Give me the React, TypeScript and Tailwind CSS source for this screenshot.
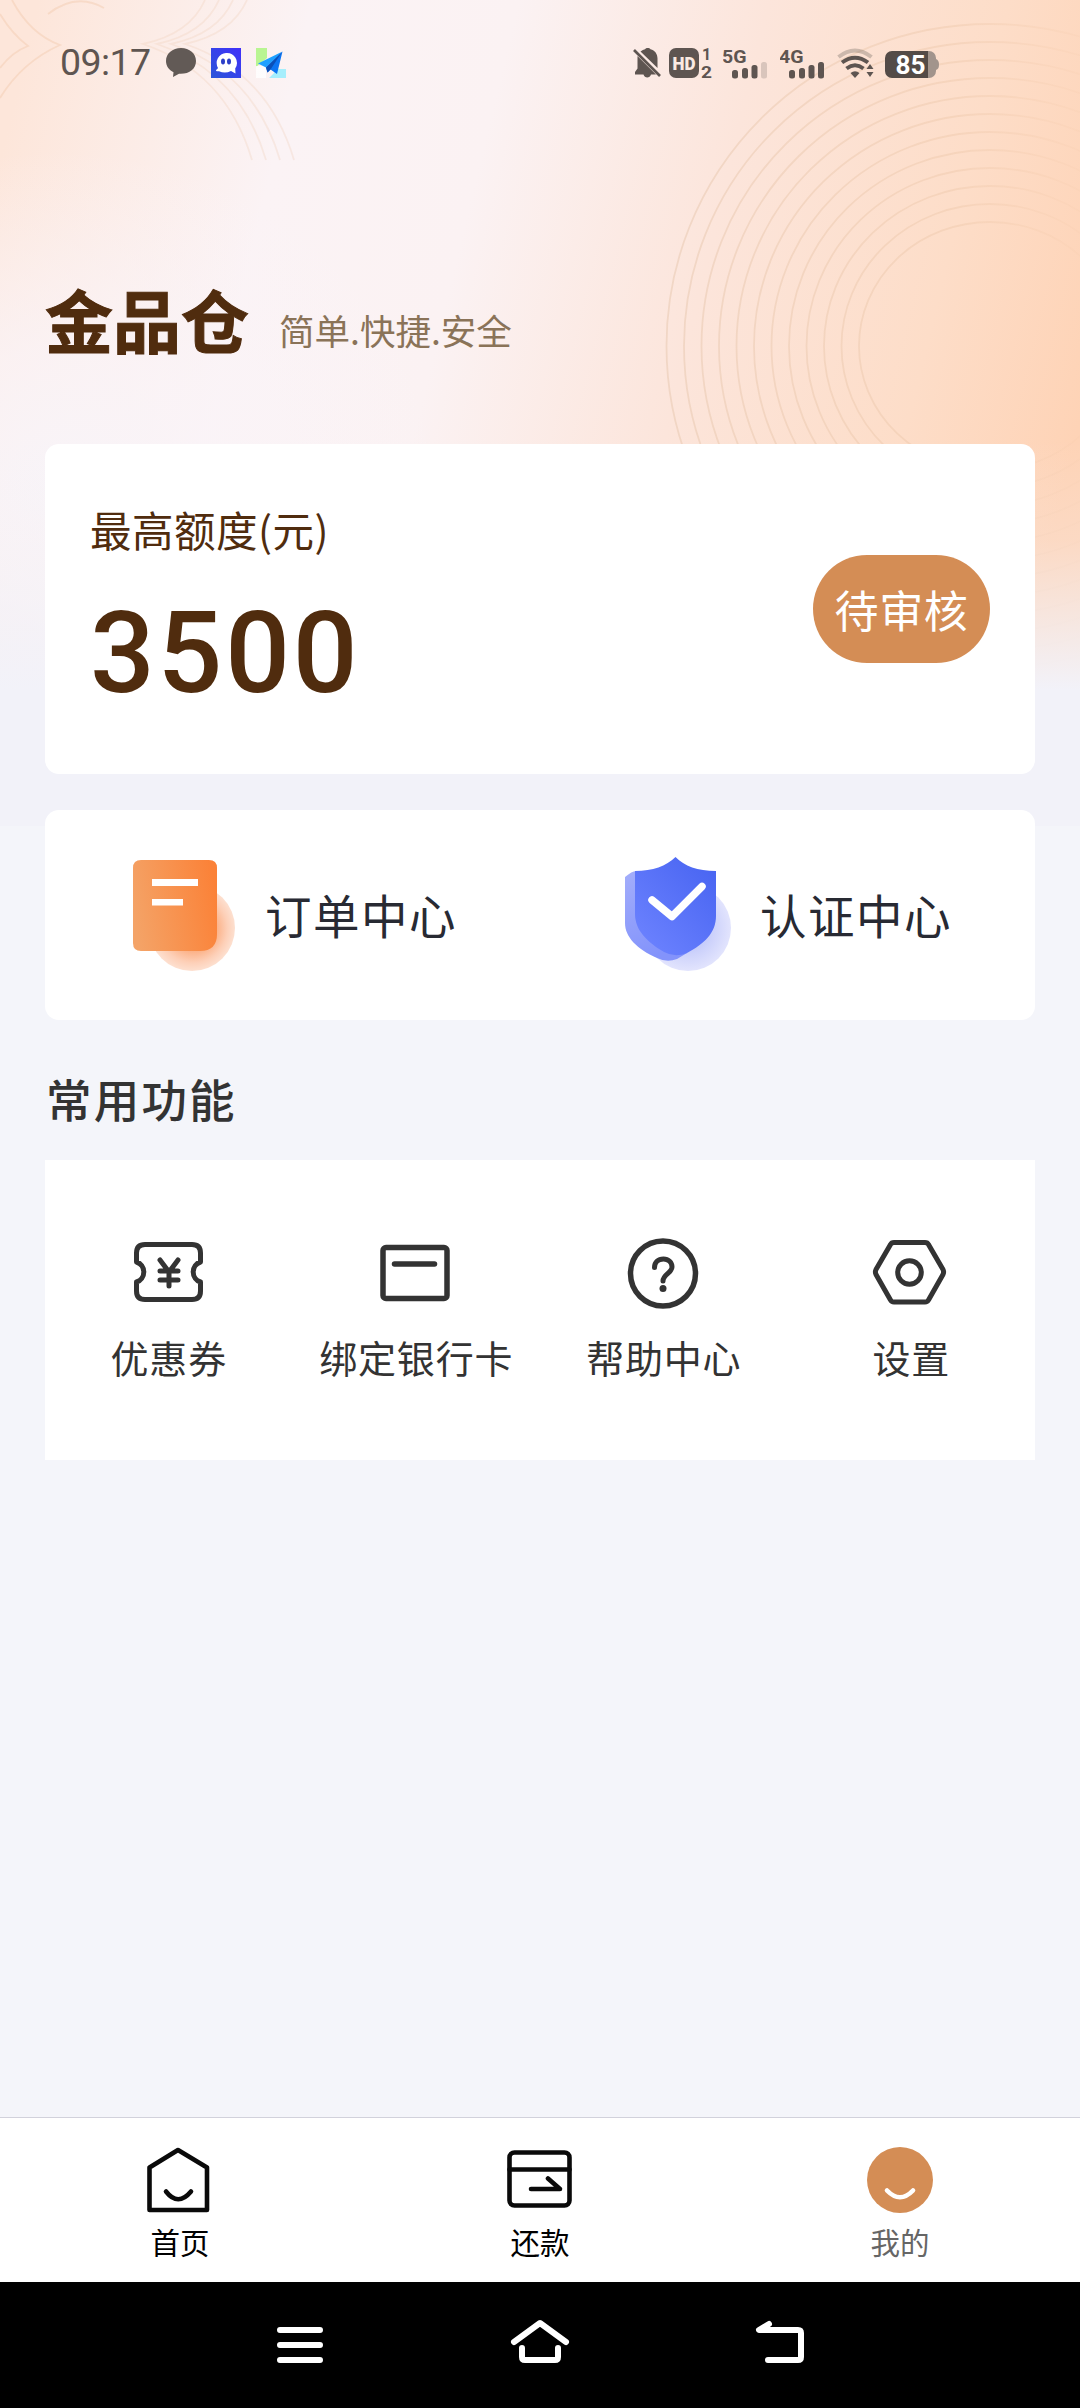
import type { ReactNode } from "react";

const rings = Array.from({ length: 12 }, (_, i) => i);
const chevrons = Array.from({ length: 4 }, (_, i) => i);

function HeaderBackdrop() {
  return (
    <div className="absolute inset-x-0 top-0 h-[826px] overflow-hidden bg-[#f2f2f9]">
      <svg width="1080" height="826" viewBox="0 0 1080 826" fill="none">
        <defs>
          <linearGradient id="wash" x1="0" y1="160" x2="1080" y2="420" gradientUnits="userSpaceOnUse">
            <stop offset="0" stopColor="#fde6da" />
            <stop offset="0.24" stopColor="#fbf3f5" />
            <stop offset="0.42" stopColor="#fbf2f3" />
            <stop offset="0.64" stopColor="#fce5db" />
            <stop offset="0.85" stopColor="#fdddc8" />
            <stop offset="1" stopColor="#fed3b6" />
          </linearGradient>
          <radialGradient id="soft" cx="0" cy="0" r="1" gradientTransform="translate(60 480) scale(380 330)" gradientUnits="userSpaceOnUse">
            <stop offset="0" stopColor="#f8f4f8" />
            <stop offset="0.4" stopColor="#faf4f8" stopOpacity="0.75" />
            <stop offset="1" stopColor="#faf4f8" stopOpacity="0" />
          </radialGradient>
          <linearGradient id="fade" x1="0" y1="440" x2="0" y2="690" gradientUnits="userSpaceOnUse">
            <stop offset="0" stopColor="#f2f2f9" stopOpacity="0" />
            <stop offset="0.4" stopColor="#f2f2f9" stopOpacity="0.2" />
            <stop offset="1" stopColor="#f2f2f9" />
          </linearGradient>
          <linearGradient id="ring" x1="660" y1="0" x2="1080" y2="0" gradientUnits="userSpaceOnUse">
            <stop offset="0" stopColor="#e6c6ad" stopOpacity="0.5" />
            <stop offset="0.7" stopColor="#ecc6a8" stopOpacity="0.42" />
            <stop offset="1" stopColor="#f3c8a8" stopOpacity="0.15" />
          </linearGradient>
        </defs>
        <rect width="1080" height="826" fill="url(#wash)" />
        <rect width="1080" height="826" fill="url(#soft)" />
        <g stroke="url(#ring)" strokeWidth="1.8">
          {rings.map((i) => (
            <ellipse key={i} cx="990" cy="346" rx={131 + i * 17.5} ry={124 + i * 18} />
          ))}
        </g>
        <g stroke="#f2caac" strokeOpacity="0.45" strokeWidth="1.8">
          <path d="M0 14Q12 34 28 46Q12 52 0 68" />
          <path d="M12 0Q30 34 60 45Q22 62 0 98" />
          <path d="M48 14Q76 -8 104 8" />
        </g>
        <g stroke="#efccb6" strokeOpacity="0.3" strokeWidth="1.8">
          {chevrons.map((i) => (
            <path key={i} d="M205 0Q190 34 143 44Q226 72 252 160" transform={`translate(${i * 14} 0)`} />
          ))}
        </g>
        <rect y="440" width="1080" height="386" fill="url(#fade)" />
      </svg>
    </div>
  );
}

function SignalIcon({ label, weak }: { label: string; weak?: boolean }) {
  return (
    <svg width="44" height="36" viewBox="0 0 44 36" fill="#5e5551">
      <text x="-1" y="17.500" fontSize="19" fontWeight="700" textLength="24.500" lengthAdjust="spacingAndGlyphs">
        {label}
      </text>
      <rect x="9" y="25" width="6" height="8.500" rx="2.500" />
      <rect x="19" y="23" width="6" height="10.500" rx="2.500" />
      <rect x="28.500" y="20" width="6" height="13.500" rx="2.500" />
      <rect x="38" y="17" width="6" height="16.500" rx="2.500" fillOpacity={weak ? 0.22 : 1} />
    </svg>
  );
}

function StatusBar() {
  return (
    <div className="flex h-[126px] items-center pl-[60px] font-[Roboto,sans-serif] text-[#5e5551]">
      <span className="w-[106px] text-[37.5px] leading-none tracking-[-0.6px]">09:17</span>
      <svg width="30" height="36" viewBox="0 0 30 36" fill="#625a56">
        <path d="M15 3C6.500 3 0 8.500 0 16c0 5 3 9 7.500 11.200L7 32l6-3.200C23 29.500 30 24 30 16 30 8.500 23.500 3 15 3Z" />
      </svg>
      <svg className="ml-[15px]" width="30" height="30" viewBox="0 0 30 30">
        <defs>
          <linearGradient id="appblue" x1="0" y1="1" x2="1" y2="0">
            <stop offset="0" stopColor="#2a55d8" />
            <stop offset="1" stopColor="#4130fa" />
          </linearGradient>
        </defs>
        <rect width="30" height="30" fill="url(#appblue)" />
        <path d="M15 5a10 10 0 0 0-8 15c-1 1.500-2 1.600-2 2.400 0 .8 1.600.8 3 .8Q14 26 20 23l4.500 2.500-.3-5A10 10 0 0 0 15 5Z" fill="#fff" />
        <ellipse cx="12" cy="13.500" rx="2" ry="3" fill="#2c3fc8" />
        <ellipse cx="18" cy="13.500" rx="2" ry="3" fill="#2c3fc8" />
      </svg>
      <svg className="ml-[15px]" width="30" height="30" viewBox="0 0 30 30">
        <path d="M0 0h11v10L0 19Z" fill="#b9f592" />
        <path d="M0 18h10v12H0Z" fill="#fff" fillOpacity="0.8" />
        <path d="M20 21h10v9H13l5-5Z" fill="#a6eefc" />
        <path d="M26.500 3.500 2 15.500l8 4Z" fill="#1ea0ff" />
        <path d="M26.500 3.500 10 19.500l1.500 5 3-3 6.500 4.500Z" fill="#0c74f2" />
        <path d="m10 19.500 1.500 5 3-3L26 4Z" fill="#0a4fb8" />
      </svg>
      <svg className="ml-[347px]" width="28" height="36" viewBox="0 0 28 36" fill="#5e5551">
        <path d="M7.500 6.500Q10 4.500 12 4.200c1-1.700 4.500-1.700 5.500 0 4.500 1 7 4.800 7 9.300v9.500L7.500 6.500Z" />
        <path d="M4.500 11 23 29.500h-5c-1 4-6.500 4-7.500 0H2V27l2.500-3.500V11Z" />
        <path d="M1 5 27 31" stroke="#5e5551" strokeWidth="2.600" />
      </svg>
      <svg className="ml-2" width="43" height="36" viewBox="0 0 43 36" fill="#5e5551">
        <rect y="3" width="30" height="30" rx="7" />
        <text x="3.500" y="24.500" fontSize="18" fontWeight="900" fill="#fbeae2" textLength="23" lengthAdjust="spacingAndGlyphs">HD</text>
        <text x="33" y="15" fontSize="16" fontWeight="700">1</text>
        <text x="32" y="33" fontSize="16" fontWeight="700" textLength="11" lengthAdjust="spacingAndGlyphs">2</text>
      </svg>
      <span className="ml-[11px]"><SignalIcon label="5G" weak /></span>
      <span className="ml-[13px]"><SignalIcon label="4G" /></span>
      <svg className="ml-[13px]" width="37" height="36" viewBox="0 0 37 36" fill="none">
        <path d="M1.500 12Q18 -1 34.500 12" stroke="#5e5551" strokeOpacity="0.3" strokeWidth="4" />
        <path d="M5 17.500Q18 8 31 17.500" stroke="#5e5551" strokeWidth="4" />
        <path d="M9.500 23.500Q18 17 26.500 23.500" stroke="#5e5551" strokeWidth="4" />
        <path d="M13.500 28Q18 24.500 22.500 28L18 33Z" fill="#5e5551" />
        <path d="m33 19 3.500 5h-7ZM33 32l3.500-5h-7Z" fill="#5e5551" />
      </svg>
      <svg className="ml-[11px]" width="56" height="36" viewBox="0 0 56 36">
        <path d="M7 6h37v27H7a7 7 0 0 1-7-7V13a7 7 0 0 1 7-7Z" fill="#544b47" />
        <path d="M43 6h1a7 7 0 0 1 7 7v13a7 7 0 0 1-7 7h-1Z" fill="#a2948c" />
        <path d="M51 14q3 1 3 5.500T51 25Z" fill="#a2948c" />
        <text x="10.500" y="28.500" fontSize="25" fontWeight="700" fill="#fff" textLength="30" lengthAdjust="spacingAndGlyphs">85</text>
      </svg>
    </div>
  );
}

function OrderIcon() {
  return (
    <svg width="112" height="120" viewBox="130 856 112 120">
      <defs>
        <linearGradient id="doc" x1="0" y1="0.6" x2="1" y2="0.4">
          <stop offset="0" stopColor="#f4a367" />
          <stop offset="1" stopColor="#fb8238" />
        </linearGradient>
        <radialGradient id="docglow" cx="0.5" cy="0.5" r="0.5" fx="0.55" fy="0.52">
          <stop offset="0" stopColor="#fa8c4c" />
          <stop offset="0.45" stopColor="#fbaa7c" />
          <stop offset="0.8" stopColor="#fdd0b8" />
          <stop offset="1" stopColor="#fde0d0" />
        </radialGradient>
      </defs>
      <circle cx="192" cy="929" r="43" fill="url(#docglow)" />
      <path d="M141 861h68q8 0 8 8v66q0 17-17 17h-59q-8 0-8-8v-75q0-8 8-8Z" fill="url(#doc)" />
      <path d="M152 880h46v7h-46zM152 900h31v6.500h-31z" fill="#fff" />
    </svg>
  );
}

function ShieldIcon() {
  return (
    <svg width="112" height="120" viewBox="625 856 112 120">
      <defs>
        <linearGradient id="shield" x1="0" y1="0.9" x2="0.8" y2="0">
          <stop offset="0" stopColor="#6d83ff" />
          <stop offset="1" stopColor="#4a66f2" />
        </linearGradient>
        <linearGradient id="shieldback" x1="0" y1="0" x2="0.3" y2="1">
          <stop offset="0" stopColor="#a3aefb" />
          <stop offset="1" stopColor="#8393fb" />
        </linearGradient>
        <radialGradient id="shieldglow">
          <stop offset="0" stopColor="#a9b3f8" />
          <stop offset="0.6" stopColor="#cdd2fb" />
          <stop offset="1" stopColor="#e2e4fd" />
        </radialGradient>
      </defs>
      <circle cx="688" cy="929" r="43" fill="url(#shieldglow)" />
      <path d="M636 872q-4 0-11 6v46c0 14 12 26 32 35q10 5 20 1l10-6V872Z" fill="url(#shieldback)" />
      <path d="M675.500 858c9 9 22 14 40.500 14v45c0 17-12 28-29 37q-12 5-23-1c-17-10-29-22-29-38v-43c18 0 31-5 40.500-14Z" fill="url(#shield)" />
      <path d="m652 901 20 16.500 30-30" fill="none" stroke="#fff" strokeWidth="7.500" strokeLinecap="round" strokeLinejoin="round" />
    </svg>
  );
}

function CenterLink({ icon, label }: { icon: ReactNode; label: string }) {
  return (
    <div className="flex w-1/2 items-center pl-[85px]">
      {icon}
      <span className="-mt-[3px] ml-[23px] text-[46.5px] tracking-[1.5px] whitespace-nowrap text-[#282a33]">{label}</span>
    </div>
  );
}

function FeatureItem({ children, label }: { children: ReactNode; label: string }) {
  return (
    <div className="flex w-1/4 flex-col items-center">
      <svg width="80" height="80" viewBox="0 0 80 80" fill="none" stroke="#333" strokeWidth="5" strokeLinecap="round" strokeLinejoin="round">
        {children}
      </svg>
      <span className="mt-4 text-[38px] leading-[56px] tracking-[0.8px] whitespace-nowrap text-[#333]">{label}</span>
    </div>
  );
}

function TabItem({ children, label, muted }: { children: ReactNode; label: string; muted?: boolean }) {
  return (
    <div className="flex w-1/3 flex-col items-center pt-[26px]">
      <svg width="72" height="72" viewBox="0 0 72 72" fill="none" stroke="#0a0a0a" strokeWidth="4.600" strokeLinecap="round" strokeLinejoin="round">
        {children}
      </svg>
      <span className={muted ? "mt-[3px] text-[29.5px] leading-[44px] text-[#666]" : "mt-[3px] text-[29.5px] leading-[44px] text-black"}>{label}</span>
    </div>
  );
}

export default function App() {
  return (
    <div className="relative flex h-[2408px] w-[1080px] flex-col bg-[#f4f5fa] font-['Noto_Sans_CJK_SC',sans-serif]">
      <HeaderBackdrop />
      <div className="relative flex flex-1 flex-col">
        <StatusBar />

        <header className="flex h-[318px] items-start px-[45px] pt-[143px]">
          <h1 className="text-[68px] leading-[100px] font-bold text-[#502c0e] [-webkit-text-stroke:1px_#502c0e]">金品仓</h1>
          <p className="mt-[35px] ml-[30px] text-[35.5px] leading-[52px] text-[#8a7358]">简单.快捷.安全</p>
        </header>

        <section className="mx-[45px] flex h-[330px] items-start justify-between rounded-[14px] bg-white pr-[45px] pl-[45px] text-[#502c0e]">
          <div className="pt-[54px]">
            <p className="text-[41.5px] leading-[62px] tracking-[0.5px]">最高额度(元)</p>
            <p className="mt-[26px] font-[Roboto,sans-serif] text-[114px] leading-[134px] font-medium tracking-[2.8px]">3500</p>
          </div>
          <button className="mt-[111px] flex h-[108px] w-[177px] items-center justify-center rounded-full bg-[#d48d55] text-[44px] tracking-[0.7px] text-white">
            待审核
          </button>
        </section>

        <section className="mx-[45px] mt-9 flex h-[210px] rounded-[14px] bg-white">
          <CenterLink icon={<OrderIcon />} label="订单中心" />
          <CenterLink icon={<ShieldIcon />} label="认证中心" />
        </section>

        <h2 className="mt-[44px] ml-[46px] text-[45.5px] leading-[68px] font-medium tracking-[2.2px] text-[#333]">常用功能</h2>

        <section className="mx-[45px] mt-[28px] flex h-[300px] bg-white pt-[73px]">
          <FeatureItem label="优惠券">
            <path d="M16 11.500H63Q71.500 11.500 71.500 20V29A10.500 10.500 0 0 0 71.500 49V58Q71.500 66.500 63 66.500H16Q7.500 66.500 7.500 58V49A10.500 10.500 0 0 0 7.500 29V20Q7.500 11.500 16 11.500Z" />
            <path d="m31 27 9 12 9-12M31 38h18M31 47h18M40 39v14" />
          </FeatureItem>
          <FeatureItem label="绑定银行卡">
            <rect x="7" y="14.500" width="64" height="51" rx="3" strokeWidth="5.500" />
            <path d="M18.500 31h40" strokeWidth="5.500" />
          </FeatureItem>
          <FeatureItem label="帮助中心">
            <circle cx="39" cy="40.500" r="32.500" strokeWidth="5.500" />
            <path d="M30.500 34.500c0-5 3.500-8.500 9-8.500 5 0 8.500 3.500 8.500 8 0 6-9 7.500-9 14" />
            <circle cx="39" cy="55.500" r="3.500" fill="#333" stroke="none" />
          </FeatureItem>
          <FeatureItem label="设置">
            <path d="M23 9.500H54Q56.500 9.500 57.500 11.500L72 36.500Q73.200 39 72 41.500L57.500 67Q56.500 69 54 69H23Q20.500 69 19.500 67L5 41.500Q3.800 39 5 36.500L19.500 11.500Q20.500 9.500 23 9.500Z" />
            <circle cx="38.500" cy="39.500" r="11.800" />
          </FeatureItem>
        </section>
      </div>

      <nav className="relative flex h-[165px] border-t border-[#d2d2dc] bg-white">
        <TabItem label="首页">
          <path d="M34 6 63 23.500V66H5.500V23.500Z" />
          <path d="M22 47.500q12 15.500 25 0" />
        </TabItem>
        <TabItem label="还款">
          <rect x="5.500" y="8.500" width="60" height="53" rx="5" />
          <path d="M5.500 25.500h60M27 45h29l-12-10.500" />
        </TabItem>
        <TabItem label="我的" muted>
          <circle cx="36" cy="36" r="33" fill="#d48d55" stroke="none" />
          <path d="M23 46.500q13 13.500 26 0" stroke="#fff" strokeWidth="4.600" />
        </TabItem>
      </nav>

      <div className="relative flex h-[126px] items-center justify-between bg-black px-[270px]">
        <svg width="60" height="60" viewBox="0 0 60 60" fill="none" stroke="#fff" strokeWidth="6" strokeLinecap="round">
          <path d="M10 15h40M10 30h40M10 45h40" />
        </svg>
        <svg width="60" height="60" viewBox="0 0 60 60" fill="none" stroke="#fff" strokeWidth="6" strokeLinecap="round" strokeLinejoin="round">
          <path d="M4 27 30 8 56 27M12 33v9q0 3 3 3h30q3 0 3-3v-9" />
        </svg>
        <svg width="60" height="60" viewBox="0 0 60 60" fill="none" stroke="#fff" strokeWidth="6" strokeLinecap="round" strokeLinejoin="round">
          <path d="m19 9-10 6h39q3 0 3 3v24q0 3-3 3H18" />
        </svg>
      </div>
    </div>
  );
}
